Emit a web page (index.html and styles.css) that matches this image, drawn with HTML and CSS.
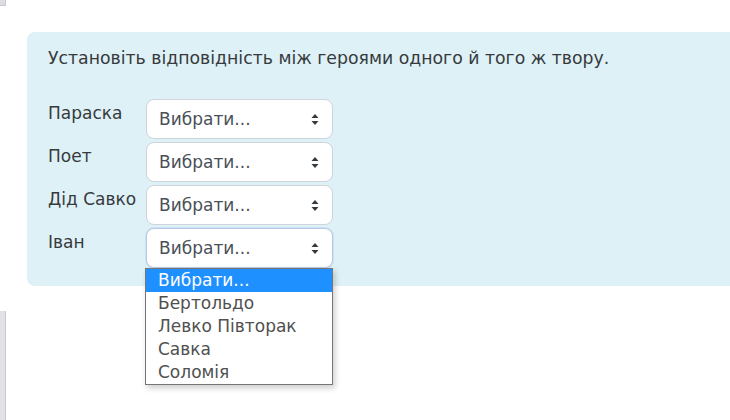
FILE: index.html
```html
<!DOCTYPE html>
<html lang="uk">
<head>
    <meta charset="UTF-8">
    <title>Відповідність</title>
    <link rel="stylesheet" href="styles.css">
</head>
<body>
    <div class="top-mark"></div>

    <div class="que">
        <p class="qtext">Установіть відповідність між героями одного й того ж твору.</p>

        <div class="answer">
            <div class="row">
                <label class="hero" for="m1">Параска</label>
                <select class="pick" id="m1"><option>Вибрати...</option></select>
            </div>
            <div class="row">
                <label class="hero" for="m2">Поет</label>
                <select class="pick" id="m2"><option>Вибрати...</option></select>
            </div>
            <div class="row">
                <label class="hero" for="m3">Дід Савко</label>
                <select class="pick" id="m3"><option>Вибрати...</option></select>
            </div>
            <div class="row">
                <label class="hero" for="m4">Іван</label>
                <div class="pick-wrap">
                    <select class="pick pick-open" id="m4"><option>Вибрати...</option></select>
                    <ul class="dropdown">
                        <li class="active">Вибрати...</li>
                        <li>Бертольдо</li>
                        <li>Левко Півторак</li>
                        <li>Савка</li>
                        <li>Соломія</li>
                    </ul>
                </div>
            </div>
        </div>
    </div>

    <div class="side-bar"></div>
</body>
</html>
```

FILE: styles.css
```css
body {
    margin: 0;
    background-color: #fff;
    font-family: "DejaVu Sans", sans-serif;
    color: #373a3c;
    overflow: hidden;
}

.top-mark {
    width: 5px;
    height: 5px;
    background-color: #dcdce3;
    border: 1px solid #c9c9d2;
    border-left: none;
    border-top: none;
}

.que {
    margin: 26px 0 0 27px;
    padding: 13px 0 18px 21px;
    background-color: #def1f7;
    border-radius: 8px 0 0 8px;
}

.qtext {
    margin: 0 0 27px;
    font-size: 17.3px;
    line-height: 27px;
}

.row {
    display: flex;
    align-items: flex-start;
    margin-bottom: 3px;
}

.row:last-child {
    margin-bottom: 0;
}

.hero {
    width: 98px;
    font-size: 17px;
    line-height: 26px;
    padding-top: 1px;
}

.pick-wrap {
    position: relative;
}

.pick {
    appearance: none;
    -webkit-appearance: none;
    width: 187px;
    height: 40px;
    padding: 0 12px;
    margin: 0;
    font-family: inherit;
    font-size: 17px;
    color: #495057;
    background-color: #fff;
    background-image: url("data:image/svg+xml;utf8,<svg xmlns='http://www.w3.org/2000/svg' width='8' height='11' viewBox='0 0 8 11'><path d='M4 0L7.5 4H0.5Z M4 11L7.5 7H0.5Z' fill='%23343a40'/></svg>");
    background-repeat: no-repeat;
    background-position: right 13px center;
    border: 1px solid #ced4da;
    border-radius: 8px;
}

.pick-open {
    border-color: #b9c8e6;
    box-shadow: 0 0 0 1px rgba(150, 180, 230, 0.25);
}

.dropdown {
    position: absolute;
    top: 40px;
    left: -1px;
    width: 186px;
    margin: 0;
    padding: 0;
    list-style: none;
    background-color: #fff;
    border: 1px solid #767676;
    box-shadow: 2px 3px 6px rgba(0, 0, 0, 0.2);
    z-index: 2;
}

.dropdown li {
    height: 23px;
    line-height: 23px;
    padding-left: 12px;
    font-size: 17px;
    color: #505050;
}

.dropdown li.active {
    background-color: #1e90ff;
    color: #fff;
}

.side-bar {
    width: 5px;
    height: 110px;
    margin-top: 25px;
    background-color: #e1e1e7;
    border-right: 1px solid #c9c9d2;
}
```
